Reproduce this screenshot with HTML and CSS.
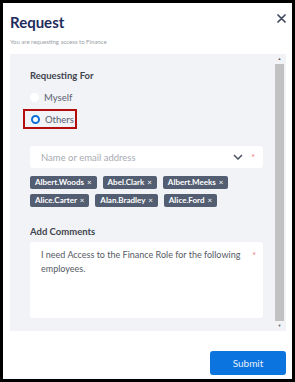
FILE: index.html
```html
<!DOCTYPE html>
<html lang="en">

<head>
	<meta charset="UTF-8">
	<meta name="viewport" content="width=device-width, initial-scale=1.0">
	<title>Request</title>
	<link rel="stylesheet" href="styles.css">
</head>

<body>
	<div class="dialog">
		<div class="header">
			<div>
				<h1 class="title">Request</h1>
				<p class="subtitle">You are requesting access to Finance</p>
			</div>
			<button class="close" aria-label="Close">
				<svg width="9" height="9" viewBox="0 0 9 9">
					<path d="M1 1L8 8M8 1L1 8" stroke="#3f4a5e" stroke-width="1.7" stroke-linecap="round" />
				</svg>
			</button>
		</div>

		<div class="panel">
			<div class="panel-body">
				<div class="label">Requesting For</div>
				<label class="radio">
					<span class="dot"></span>
					<span>Myself</span>
				</label>
				<label class="radio radio-active">
					<span class="dot dot-on"></span>
					<span>Others</span>
				</label>

				<div class="field">
					<span class="placeholder">Name or email address</span>
					<svg class="chevron" width="10" height="6" viewBox="0 0 10 6">
						<path d="M1 1L5 5L9 1" fill="none" stroke="#4a5162" stroke-width="1.5" />
					</svg>
					<span class="req">*</span>
				</div>

				<div class="tags">
					<span class="tag">Albert.Woods <i>×</i></span>
					<span class="tag">Abel.Clark <i>×</i></span>
					<span class="tag">Albert.Meeks <i>×</i></span>
					<span class="tag">Alice.Carter <i>×</i></span>
					<span class="tag">Alan.Bradley <i>×</i></span>
					<span class="tag">Alice.Ford <i>×</i></span>
				</div>

				<div class="label label-comments">Add Comments</div>
				<div class="textarea">
					<p>I need Access to the Finance Role for the following employees.</p>
					<span class="req">*</span>
				</div>
			</div>

			<div class="scrollbar">
				<span class="arrow">&#9650;</span>
				<div class="thumb"></div>
				<span class="arrow">&#9660;</span>
			</div>
		</div>

		<div class="footer">
			<button class="submit">Submit</button>
		</div>
	</div>
</body>

</html>
```

FILE: styles.css
```css
html,
body {
	margin: 0;
	padding: 0;
	width: 100%;
	height: 100%;
	background-color: black;
	font-family: Lato, "Open Sans", sans-serif;
}

body {
	box-sizing: border-box;
	padding: 3px 3px 3px 3px;
}

.dialog {
	background: white;
	height: 376px;
	width: 289px;
	display: flex;
	flex-direction: column;
}

.header {
	display: flex;
	justify-content: space-between;
	padding: 0 6px 0 7px;
	height: 51px;
}

.title {
	margin: 9px 0 0 0;
	font-size: 15px;
	line-height: 21px;
	font-weight: 700;
	color: #1d2b5c;
}

.subtitle {
	margin: 5px 0 0 0;
	font-size: 6px;
	color: #9a9ea6;
}

.close {
	border: 0;
	background: none;
	padding: 0;
	margin-top: 11px;
	width: 9px;
	height: 9px;
	display: flex;
}

.panel {
	margin: 0 6px 0 7px;
	height: 277px;
	background: #f1f3f7;
	display: flex;
}

.panel-body {
	flex: 1;
	padding: 15px 12px 0 20px;
}

.label {
	font-size: 9.5px;
	line-height: 14px;
	font-weight: 700;
	color: #3f444e;
}

.radio {
	display: flex;
	align-items: center;
	gap: 5px;
	height: 20px;
	font-size: 9.5px;
	color: #5a6070;
	margin-top: 4px;
}

.radio-active {
	box-sizing: border-box;
	width: 54px;
	height: 20px;
	margin: 2px 0 0 -7px;
	padding-left: 6px;
	border: 2px solid #b40d0d;
}

.dot {
	box-sizing: border-box;
	flex-shrink: 0;
	width: 9px;
	height: 9px;
	border-radius: 50%;
	background: white;
}

.dot-on {
	border: 2.5px solid #0d6fd8;
}

.field {
	margin-top: 17px;
	height: 22px;
	background: white;
	border-radius: 3px;
	display: flex;
	align-items: center;
	padding: 0 8px 0 11px;
	font-size: 9.5px;
}

.placeholder {
	flex: 1;
	color: #a7abb3;
}

.chevron {
	margin-right: 8px;
}

.req {
	color: #f07b7b;
	font-size: 9px;
	line-height: 9px;
}

.tags {
	margin-top: 8px;
	display: flex;
	flex-wrap: wrap;
	gap: 5px 6px;
	width: 205px;
}

.tag {
	background: #535e72;
	color: white;
	font-size: 8px;
	font-weight: 700;
	height: 13px;
	line-height: 13px;
	padding: 0 5px;
	border-radius: 2px;
}

.tag i {
	font-style: normal;
	font-weight: 400;
	margin-left: 1px;
}

.label-comments {
	margin-top: 18px;
}

.textarea {
	margin-top: 3px;
	height: 76px;
	box-sizing: border-box;
	background: white;
	border-radius: 3px;
	display: flex;
	padding: 6px 7px 0 11px;
}

.textarea p {
	margin: 0;
	flex: 1;
	font-size: 9px;
	line-height: 13.5px;
	color: #555a64;
}

.textarea .req {
	margin-top: 3px;
}

.scrollbar {
	width: 9px;
	margin-right: 2px;
	display: flex;
	flex-direction: column;
	align-items: center;
}

.arrow {
	font-size: 4px;
	line-height: 10px;
	height: 10px;
	color: #606060;
}

.thumb {
	flex: 1;
	width: 9px;
	background: #c1c1c1;
}

.footer {
	display: flex;
	justify-content: flex-end;
	padding: 20px 6px 0 0;
}

.submit {
	width: 76px;
	height: 24px;
	border: 0;
	border-radius: 3px;
	background: #0b74de;
	color: #e6f0fb;
	font-family: Lato, "Open Sans", sans-serif;
	font-size: 10px;
}
```
